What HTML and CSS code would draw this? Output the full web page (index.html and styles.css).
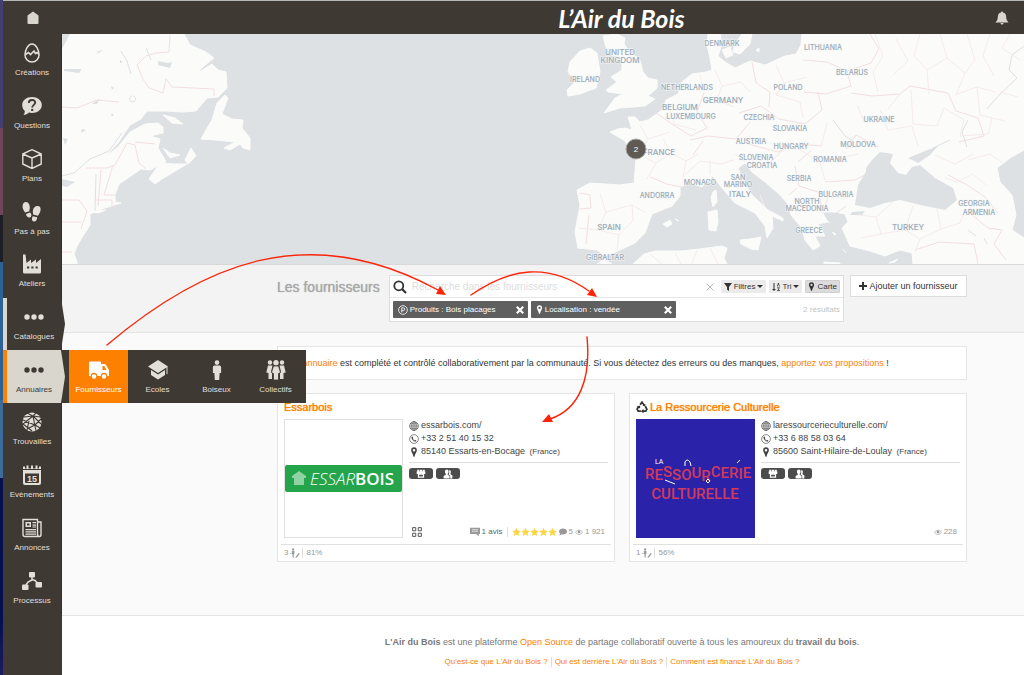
FILE: index.html
```html
<!DOCTYPE html>
<html lang="fr">
<head>
<meta charset="utf-8">
<title>Les fournisseurs - L'Air du Bois</title>
<link rel="stylesheet" href="styles.css">
</head>
<body>
<svg class="defs" aria-hidden="true">
  <symbol id="dots" viewBox="0 0 20 20"><circle cx="3" cy="10" r="2.7"/><circle cx="10" cy="10" r="2.7"/><circle cx="17" cy="10" r="2.7"/></symbol>
  <symbol id="man" viewBox="0 0 10 20"><circle cx="5" cy="2.6" r="2.3"/><path d="M2.5 5.5h5q1.600 0 1.600 1.600V13H7.600l-.4 7H2.800l-.4-7H.9V7.100q0-1.600 1.600-1.600z"/></symbol>
  <symbol id="pin" viewBox="0 0 10 14"><path fill-rule="evenodd" d="M5 .5a4 4 0 0 0-4 4c0 3 2.600 4.500 3.200 9h1.600C6.400 9 9 7.500 9 4.500a4 4 0 0 0-4-4zm0 2.300a1.800 1.800 0 1 1 0 3.600 1.800 1.800 0 0 1 0-3.600z"/></symbol>
  <symbol id="globe" viewBox="0 0 16 16"><g fill="none" stroke="currentColor"><circle cx="8" cy="8" r="7"/><ellipse cx="8" cy="8" rx="3.500" ry="7"/><path d="M8 1v14M1 8h14M2 4.500h12M2 11.500h12"/></g></symbol>
  <symbol id="phone" viewBox="0 0 16 16"><circle cx="8" cy="8" r="7" fill="none" stroke="currentColor"/><path d="M5 3.500c-2 1.500-1 4 .8 6 2 2 4.600 3.400 6.200 1.500l-2-1.700-1.200 1C7.500 9.700 6.500 8.600 6 7.300l1-1z"/></symbol>
  <symbol id="shop" viewBox="0 0 16 16"><path fill-rule="evenodd" d="M2 1h3v3H2zm4 0h4v3H6zm5 0h3v3h-3zM1 4h14v3a2 2 0 0 1-2 1v6H3V8a2 2 0 0 1-2-1zm4 5v3h6V9z"/></symbol>
  <symbol id="people" viewBox="0 0 16 16"><ellipse cx="6" cy="4.500" rx="3" ry="3.800"/><path d="M4.500 7h3v2l3 2v4H1v-4l3.500-2z"/><path d="M9.500 2c3-1 4 2 2.500 5v1.500l3 2V15h-3.500v-4.500L9 9c1-2 1.500-4 .5-7z"/></symbol>
  <symbol id="eye" viewBox="0 0 16 12"><path fill-rule="evenodd" d="M8 1.500C4.500 1.500 2 4 .5 6.300 2 8.700 4.500 11 8 11s6-2.300 7.500-4.700C14 4 11.500 1.500 8 1.500zm0 1c3 0 5 2 6.300 3.800C13 8 11 10 8 10S3 8 1.700 6.300C3 4.500 5 2.500 8 2.500z"/><circle cx="8" cy="6" r="2.800"/></symbol>
  <symbol id="vote" viewBox="0 0 16 16"><circle cx="5" cy="2.300" r="1.800"/><path d="M3 4.500h4v5l-1 .5v5H4v-5l-1-.5zM0 8h2v1H0zM9 14l5-6 1.500 1.200L11 15H8.500z"/></symbol>
  <symbol id="cross" viewBox="0 0 10 10"><path d="M1 1l8 8m0-8l-8 8" fill="none" stroke="currentColor" stroke-width="2.600"/></symbol>
  <symbol id="star" viewBox="0 0 16 16"><path d="M8 .5l2.300 5 5.400.6-4 3.700 1.100 5.500L8 12.600l-4.800 2.700 1.100-5.500-4-3.700 5.400-.6z"/></symbol>
</svg>

<header class="topbar">
  <a class="home" href="#" aria-label="Accueil"><svg class="i14" viewBox="0 0 14 14"><path d="M7 0.500l5.500 4v7.500q0 1-1 1h-9q-1 0-1-1V4.500z"/></svg></a>
  <a class="logo" href="#">L’Air du Bois</a>
  <button class="bell" aria-label="Notifications"><svg class="i14" viewBox="0 0 14 14"><path d="M7 .5c.7 0 1 .5 1 1 2.200.5 3.200 2.300 3.200 4.500 0 2.500.8 3.800 2.300 5.500H.5C2 9.800 2.800 8.500 2.800 6c0-2.200 1-4 3.200-4.500 0-.5.300-1 1-1zM5.500 12h3a1.500 1.500 0 0 1-3 0z"/></svg></button>
</header>

<nav class="sidebar" aria-label="Menu principal">
  <a class="item" href="#"><svg class="i20" viewBox="0 0 20 20"><g fill="none" stroke="currentColor" stroke-width="1.500"><path d="M10 1C6 1 3 7 3 12a7 7 0 0 0 14 0c0-5-3-11-7-11z"/><path d="M3.500 11.500l3-2 2 2 3.500-3.500 1.500 2.500 1.500-1 2 2" stroke-width="1.600"/></g></svg>Créations</a>
  <a class="item" href="#"><svg class="i20" viewBox="0 0 20 20"><path d="M10 1c5.500 0 9.800 3.500 9.800 8s-4.300 8-9.800 8c-1 0-2-.1-3-.4C5.500 18 3.500 19 1.300 19c1-1 1.500-2.500 1.500-4C1.200 13.500.2 11.500.2 9 .2 4.500 4.500 1 10 1z"/><path d="M6.800 7c0-4 6.400-4 6.400-.4 0 2.400-3 2.200-3 5" fill="none" stroke="#3e3a33" stroke-width="1.900"/><circle cx="10.200" cy="13.900" r="1.200" fill="#3e3a33"/></svg>Questions</a>
  <a class="item" href="#"><svg class="i20" viewBox="0 0 20 20"><path d="M10 .7l9.200 4.300v10L10 19.500.8 15V5zM.8 5l9.200 4 9.200-4M10 9v10" fill="none" stroke="currentColor" stroke-width="1.400" stroke-linejoin="round"/></svg>Plans</a>
  <a class="item" href="#"><svg class="i20" viewBox="0 0 20 20"><path d="M4 0c2.500 0 4 3 3.800 6 0 1.500-.8 2.300-.4 3.300L3 10.500C1.500 8.500.3 6 .6 3.800.8 1.500 2 0 4 0z"/><path d="M4 12l4-1.400c1.500 1 2 3.800.3 4.700C6.300 16 4.300 14.500 4 12z"/><path d="M15.500 4c2.500 0 3.500 2 3 4.500-.4 2-1.500 3.500-2.500 5.200L11 12.500c.3-1-.3-2-.2-3.500C11 6 13 4 15.500 4z"/><path d="M10.800 14.200l4.300 1c.2 2.500-1.500 4.800-3.500 4.300-1.800-.5-2.200-3.500-.8-5.300z"/></svg>Pas à pas</a>
  <a class="item" href="#"><svg class="i20" viewBox="0 0 20 20"><path fill-rule="evenodd" d="M1 .5h2.500L4.500 9l4.500-3.500V9l5-3.500V9l5-4v13q0 1.500-1.500 1.500h-15Q1 19.500 1 18zm4 12v2h2.200v-2zm4.300 0v2h2.200v-2zm4.300 0v2h2.200v-2z"/></svg>Ateliers</a>
  <a class="item open" href="#"><svg class="i20"><use href="#dots"/></svg>Catalogues</a>
  <div class="group">
    <a class="item open active" href="#"><svg class="i20"><use href="#dots"/></svg>Annuaires</a>
    <div class="submenu">
      <a class="item current" href="#"><svg class="i20" viewBox="0 0 20 20"><path fill-rule="evenodd" d="M1 1.500h10q1 0 1 1V4h3.500q1 0 1.500 1l3 5v6H0V2.500q0-1 1-1zM13.500 6v4h4L15.300 6z"/><circle cx="5" cy="16" r="3.200" fill="#fd8000"/><circle cx="15" cy="16" r="3.200" fill="#fd8000"/><circle cx="5" cy="16.500" r="2.200"/><circle cx="15" cy="16.500" r="2.200"/></svg>Fournisseurs</a>
      <a class="item" href="#"><svg class="i20" viewBox="0 0 20 20"><path d="M10 0l10 6.500L10 13 0 6.500zM3 10l7 4.500 7-4.500v5l-7 4.500L3 15zM18.500 7h1v7h-1z"/></svg>Ecoles</a>
      <a class="item" href="#"><svg class="i20"><use href="#man"/></svg>Boiseux</a>
      <a class="item" href="#"><svg class="i20" viewBox="0 0 20 20"><circle cx="4" cy="2.500" r="2.200"/><circle cx="16" cy="2.500" r="2.200"/><path d="M2 5.500h4.500L5 12l1 1v6H2.500v-6L.3 12.500zM18 5.500h-4.500L15 12l-1 1v6h3.500v-6l2.200-.5z"/><circle cx="10" cy="2.800" r="2.700"/><path d="M7.500 6h5l2 6.500-2 1v6.500h-5v-6.500l-2-1z" stroke="#3e3a33" stroke-width=".8"/></svg>Collectifs</a>
    </div>
  </div>
  <a class="item" href="#"><svg class="i20" viewBox="0 0 20 20"><circle cx="10" cy="10" r="9.500"/><path d="M2 5l9-1 7 1M5 1l6 3 3 15M11 4L1 12l9 7M1 8l12 5 6-6M5 17l8-4 5 3M7 9l-2 9M14 1l-3 3 8 8" fill="none" stroke="#3e3a33" stroke-width="1.100"/></svg>Trouvailles</a>
  <a class="item" href="#"><svg class="i20" viewBox="0 0 20 20"><path fill-rule="evenodd" d="M1 5h18v13q0 2-2 2H3q-2 0-2-2zm2 3.500V17q0 1 1 1h12q1 0 1-1V8.500z"/><path d="M1 4V1.500h2v2h1.500v-3h2v3H9v-3h2v3h2.500v-3h2v3H17v-2h2V4z"/><text x="10" y="17" text-anchor="middle" class="day">15</text></svg>Evènements</a>
  <a class="item" href="#"><svg class="i20" viewBox="0 0 20 20"><path d="M1 1.500h14.500v15q0 2 2 2H3q-2 0-2-2zM15.500 4H19v12.500q0 2-1.500 2" fill="none" stroke="currentColor" stroke-width="1.400"/><path fill-rule="evenodd" d="M3.500 4h5.500v5H3.500zM5 5.500v2h2.500v-2zM10.500 4H14v1.200h-3.500zm0 2.500H14v1.200h-3.500zm0 2H14v1H10.500zM3.500 11H14v1.200H3.500zm0 2.300H14v1.200H3.500zm0 2.200H14v1.200H3.500z"/></svg>Annonces</a>
  <a class="item" href="#"><svg class="i20" viewBox="0 0 20 20"><rect x="7" y="1" width="6" height="5.500" rx="1"/><rect x="0" y="13.500" width="6.500" height="5.500" rx="1"/><rect x="13.500" y="11" width="6.500" height="5.500" rx="1"/><path d="M10 6v3l-4 2-2 3M10 8.500l3 1 2 2" fill="none" stroke="currentColor" stroke-width="1.500"/></svg>Processus</a>
</nav>

<main class="main">
  <section class="map" aria-label="Carte">
    <svg class="mapsvg" viewBox="62 34 962 230" preserveAspectRatio="xMinYMin slice">
      <g class="land">
        <path d="M70 34H184L190 45 206 52 214 58 204 66 196 74 212 64 218 70 226 72 227 88 218 97 207 98 196 111 183 112 165 111 147 111 141 119 130 125 118 143 104 158 118 147 130 132 145 124 158 123 163 127 163 133 150 136 160 139 158 148 164 158 166 162 150 170 141 169 128 178 119 184 115 195 115 202 121 203 105 208 90 214 90 225 83 236 77 246 74 254 77 262V264H62V50z"/>
        <path d="M225 95L228 98 222 114 232 119 243 120 242 128 250 138 250 150 243 148 240 144 230 150 224 148 235 142 215 140 201 139 206 130 212 120 217 103zM163 115L175 118 183 124 172 123zM163 148L170 153 180 155 170 158zM185 160L191 148 196 156 188 164zM160 163L175 164 187 164 172 173 162 179 155 184 149 179zM92 212L106 210 98 213z"/>
        <path d="M610 132L618 129 625 128 632 130 628 117 635 117 640 122 648 120 662 110 666 100 678 94 682 82 692 74 706 72 712 70 710 58 707 45 708 34H720L722 44 718 56 725 62 735 68 750 61 765 65 785 56 796 54 801 45 802 34H1024V150L1010 158 997 168 1000 182 1012 195 1016 215 1012 230 1024 238V264H913L912 253 900 250 885 256 870 251 850 246 842 228 848 222 845 214 835 212 822 212 828 222 818 224 825 236 815 236 820 246 813 250 805 240 802 228 791 215 788 204 778 193 765 182 752 172 745 163 738 168 743 180 752 195 768 210 783 218 783 221 772 216 773 228 767 238 765 226 755 213 735 203 722 188 713 176 702 187 690 183 680 187 680 196 672 206 652 214 645 233 635 243 620 250 605 256 597 250 578 248 575 232 580 205 577 190 590 183 620 185 634 183 636 160 625 141z"/>
        <path d="M580 51L590 48 597 53 600 72 596 88 580 94 568 96 567 90 575 82 568 72 570 62zM603 36L617 34 625 38 624 44 630 52 640 60 643 72 648 78 657 80 657 88 648 96 655 99 645 106 620 108 604 113 615 98 623 94 608 92 606 90 617 82 611 77 622 70 622 58 612 55 606 47zM722 50L730 47 733 55 726 58zM735 44L742 34H752L750 44 740 54 733 52zM756 50L759 48V52zM740 240L750 239 761 237 758 250 751 249 741 244zM713 192L716 190 717 202 713 207 711 198zM708 212L717 210 718 222 716 231 709 230zM663 224L670 220 672 224 667 227zM675 219L679 221zM633 264L644 254 655 251 680 251 700 249 722 246 727 248 724 258 727 264zM597 264L604 259 612 264zM824 262L840 263V264H824zM889 263L898 259 895 262zM826 220L830 223M832 232L836 234 834 235M843 249L846 253"/>
      </g>
      <g class="water">
        <path d="M855 205L858 185 866 172 866 168 872 160 880 152 893 154 890 163 898 173 906 175 912 167 920 165 935 178 953 188 957 200 945 210 925 206 900 200 885 203 870 208zM908 158L925 151 938 146 930 155 918 163zM852 212L865 211 862 215 850 215zM62 34h8l-8 14zM62 179l13 3-8 5-5-1zM158 61l10 2 4-1-2 6-12-3zM64 69l18 0-3 4-15-2zM92 104l8-6-3 6zM96 52l7-2-4 3zM82 129l4 1-5 3zM63 120l5-1zM63 138l5 1-3 6zM111 86l3 2-2 2zM120 60l3 2-3 1zM112 113l2 3-3 0z"/>
        <path class="river" d="M62 176L74 173 90 159 109 151 122 133M95 211l1-37M146 48l5 12M121 51l6 10 4 13M132 96a3 3 0 1 0 1 0M1024 46l-12 9-3 15 8 8-18 17-12 14M968 120l-6 12 5 15M950 140l-17 8M833 120l12 16 8 5M968 230l8 6M984 238l3 6"/>
      </g>
      <g class="border">
        <path d="M62 107l15 1 20-8 22 2M170 35l-1 17-13 1-10 3-9 9 6 14 6 9 14 5 3-14 6 8 42 2v7M86 168l21 0 8-3 12-22 8 2 4 18 7 6M101 170l-3 36M113 165l-9 30h12M62 200h17l8 11-6 18M94 200h18v7M62 222h19M62 252h10M135 142l20 2"/>
        <path d="M803 60l24 2 20 9 4 15-25 8-22-2M847 71l24-8 8-14-9-15M851 93l21 3 28-2 10-8 38 7 8 18 22 7 6 18-25 6M752 62l4 21 14 9-1 15M739 113l22-7 18 13 26 5 17-14-4-18M704 93l-7 19 10 16-16 8-22-14-14-10M690 140l18-4 28 3 14-17M693 155l10-14M748 144l30 8 18-8 26 2M784 149l-16 15M795 166l4 20 19 6 4 16M811 151l-13 11M797 188l-8 7M825 182l30-2 10-5M846 149l10-14 22 12M836 213l10-7M650 177l17 7 14 3M580 193l10 2 1 13-11 1M589 215l-3 29M948 175l19 10 18 12 13 16M966 210l22 18 14 2-8 14 12 16M915 250l24-8 35 2 4 20M825 206l4-13M752 160l13-3 9 12"/>
      </g>
      <g class="region">
        <path d="M875 34l8 22-10 16 5 20M896 39l12 22-15 14M920 34l-6 22 13 14 20-12M940 34l7 24 18 15-9 22M967 34l8 26-10 13M990 34l-7 22 11 20M1010 34l-8 14 18 12M927 70l2 24M955 95l22-8 19 5M977 87l3 28 25 6M1000 92l18 5M880 110l8 20 24-4 6 20M911 90l2 34 24 2 7-18M900 94l-12 15M944 108l20 12-4 16 28-2 4-16M857 105l8 18M968 160l22-6 14 10M935 155l20 9 18-10"/>
        <path d="M715 70l7 16 19-4 9 10M722 86l-5 14 17 7M700 75l4 17M776 65l8 18 23-6M784 83l-8 12 24 7M800 102l3 16M670 108l4 16 22 6M640 125l8 14 22-7M648 139l-8 16 16 8 15-10-8-14M656 163l-9 16M671 153l15 8-3 16M686 161l12-7M685 175l15-14 22 3 11-4M710 160v15M600 194l6 18 26-7 13 7M606 212l-8 18-20-2M598 230l21 5 14-15-1-15M619 235l-2 15M735 154l12 9M800 150l20 12 20-4M820 162l5 18M840 158l18-4M827 123l-6 24M760 195l5 12M858 215l18 2 5 17-20 4M881 234l24-4 8-24M905 230l15 9-5 13M920 239l21-10-4-20M941 229l19-6 5-14M876 217l18-16M650 254l12 10M675 253l6 11M697 250l-5 14M710 248l8 16M945 178l12 4 16-8 14 12"/>
      </g>
      <g class="labels">
        <text x="620" y="55" class="big">UNITED</text><text x="620" y="63" class="big">KINGDOM</text><text x="585" y="82">IRELAND</text><text x="722" y="46">DENMARK</text><text x="823" y="50">LITHUANIA</text><text x="852" y="75">BELARUS</text><text x="687" y="90">NETHERLANDS</text><text x="788" y="90">POLAND</text><text x="723" y="103" class="big">GERMANY</text><text x="680" y="110" class="big">BELGIUM</text><text x="691" y="119">LUXEMBOURG</text><text x="759" y="120">CZECHIA</text><text x="879" y="122">UKRAINE</text><text x="790" y="131">SLOVAKIA</text><text x="751" y="144">AUSTRIA</text><text x="791" y="149">HUNGARY</text><text x="858" y="147">MOLDOVA</text><text x="659" y="155" class="big">FRANCE</text><text x="756" y="160">SLOVENIA</text><text x="762" y="168">CROATIA</text><text x="830" y="162">ROMANIA</text><text x="738" y="180">SAN</text><text x="738" y="187">MARINO</text><text x="700" y="185">MONACO</text><text x="799" y="181">SERBIA</text><text x="740" y="197" class="big">ITALY</text><text x="657" y="198">ANDORRA</text><text x="836" y="197">BULGARIA</text><text x="807" y="204">NORTH</text><text x="807" y="211">MACEDONIA</text><text x="609" y="230" class="big">SPAIN</text><text x="809" y="233">GREECE</text><text x="908" y="230" class="big">TURKEY</text><text x="974" y="206">GEORGIA</text><text x="979" y="215">ARMENIA</text><text x="605" y="260">GIBRALTAR</text>
      </g>
      <circle cx="636" cy="149" r="10" class="cluster"/><text x="636" y="152" class="count">2</text>
    </svg>
  </section>

  <section class="searchband">
    <h1>Les fournisseurs</h1>
    <form class="search">
      <div class="searchrow">
        <svg class="i14" viewBox="0 0 14 14"><circle cx="5.800" cy="5.800" r="4.500" fill="none" stroke="#333" stroke-width="1.800"/><path d="M9 9l4 4" stroke="#333" stroke-width="2.300"/></svg>
        <input type="text" aria-label="Recherche" placeholder="Recherche dans les fournisseurs">
        <button type="button" class="clear" aria-label="Effacer"><svg class="i8" viewBox="0 0 8 8"><path d="M.5.5l7 7m0-7l-7 7" fill="none" stroke="#bbb"/></svg></button>
        <button type="button" class="tool"><svg class="i8" viewBox="0 0 8 8"><path d="M0 0h8L5 4v4L3 6.500V4z"/></svg>Filtres<i class="caret"></i></button>
        <button type="button" class="tool"><svg class="i8" viewBox="0 0 8 8"><path d="M1.500 0h1v6H4L2 8 0 6h1.500zM5 3.500L6 0h.8l1 3.500H7L6.400 1 5.800 3.500zM5 4.500h3L6.200 7.200H8V8H5l1.700-2.700H5z"/></svg>Tri<i class="caret"></i></button>
        <button type="button" class="tool on"><svg class="ipin"><use href="#pin"/></svg>Carte</button>
      </div>
      <div class="tagrow">
        <span class="tag"><svg class="i9" viewBox="0 0 16 16"><circle cx="8" cy="8" r="7" fill="none" stroke="currentColor" stroke-width="1.300"/><path d="M6 12V4.500h2.500a2.200 2.200 0 0 1 0 4.500H6" fill="none" stroke="currentColor" stroke-width="1.400"/></svg>Produits : Bois placages<button type="button" aria-label="Retirer"><svg class="i8"><use href="#cross"/></svg></button></span>
        <span class="tag wide"><svg class="ipin"><use href="#pin"/></svg>Localisation : vendée<button type="button" aria-label="Retirer"><svg class="i8"><use href="#cross"/></svg></button></span>
        <span class="results">2 résultats</span>
      </div>
    </form>
    <button class="add"><svg class="i8" viewBox="0 0 8 8"><path d="M3 0h2v3h3v2H5v3H3V5H0V3h3z"/></svg>Ajouter un fournisseur</button>
  </section>

  <section class="content">
    <p class="notice">Cet <a href="#">annuaire</a> est complété et contrôlé collaborativement par la communauté. Si vous détectez des erreurs ou des manques, <a href="#">apportez vos propositions</a> !</p>
    <div class="cards">
      <article class="card">
        <h2><a href="#">Essarbois</a></h2>
        <div class="body">
          <div class="thumb"><svg viewBox="0 0 117 117"><rect y="45" width="117" height="27" rx="2" fill="#24a54b"/><path d="M7 56l7-5 7 5v2h-2v7H9v-7H7z" fill="#8ed3a1"/><text x="25" y="65" class="essar">ESSAR<tspan class="bois">BOIS</tspan></text></svg></div>
          <div class="info">
            <ul class="contact">
              <li><svg class="i9"><use href="#globe"/></svg>essarbois.com/</li>
              <li><svg class="i9"><use href="#phone"/></svg>+33 2 51 40 15 32</li>
              <li><svg class="i9"><use href="#pin"/></svg>85140 Essarts-en-Bocage <small>(France)</small></li>
            </ul>
            <div class="badges"><span><svg class="i9"><use href="#shop"/></svg></span><span><svg class="i9"><use href="#people"/></svg></span></div>
            <div class="stats">
              <svg class="i9 qr" viewBox="0 0 16 16"><path d="M1 1h5v5H1zM10 1h5v5h-5zM1 10h5v5H1zM10 10h5v5h-5z" fill="none" stroke="currentColor" stroke-width="1.600"/></svg>
              <svg class="i9" viewBox="0 0 16 16"><path fill-rule="evenodd" d="M0 1h16v10h-2v4l-4-4H0zm3 3v1h10V4zm0 3v1h10V7z"/></svg><span class="avis">1 avis</span>
              <span class="stars"><svg class="i9"><use href="#star"/></svg><svg class="i9"><use href="#star"/></svg><svg class="i9"><use href="#star"/></svg><svg class="i9"><use href="#star"/></svg><svg class="i9"><use href="#star"/></svg></span>
              <svg class="i8" viewBox="0 0 16 16"><path d="M8 1c4.500 0 8 2.500 8 6s-3.500 6-8 6c-1 0-2 0-3-.4C4 14 2 15 0 15c1-1 2-2 2-4C.7 10 0 8.600 0 7c0-3.500 3.500-6 8-6z"/></svg>5
              <svg class="i8"><use href="#eye"/></svg>1 921
            </div>
          </div>
        </div>
        <footer>3 <svg class="i9"><use href="#vote"/></svg><span>81%</span></footer>
      </article>
      <article class="card">
        <h2><svg class="i11" viewBox="0 0 16 16"><path d="M5.500 5L8 1.500 10.800 5.500M12.500 7l2 4-1.500 2.500H9M6.500 13.500H3L1.500 11l2-4" fill="none" stroke="currentColor" stroke-width="2.300"/><path d="M8.500 5.500l4-2v4zM10 10.500v6l-3.500-3zM1 7.500l4.500-1.500v4z"/></svg><a href="#">La Ressourcerie Culturelle</a></h2>
        <div class="body">
          <div class="thumb blue"><svg viewBox="0 0 117 117"><text x="8" y="59" dy="0 1 -3 3 0 -2 3 -4 1 0 1 -1" class="red">RESSOURCERIE</text><text x="58" y="79" class="red" text-anchor="middle">CULTURELLE</text><text x="18" y="44" class="la">LA</text><path d="M48 46v-4q2-4 5 0l1 4M28 60l10 4M100 43l3-3M69 61l2-2 2 2-2 2z" fill="none" stroke="#fff"/></svg></div>
          <div class="info">
            <ul class="contact">
              <li><svg class="i9"><use href="#globe"/></svg>laressourcerieculturelle.com/</li>
              <li><svg class="i9"><use href="#phone"/></svg>+33 6 88 58 03 64</li>
              <li><svg class="i9"><use href="#pin"/></svg>85600 Saint-Hilaire-de-Loulay <small>(France)</small></li>
            </ul>
            <div class="badges"><span><svg class="i9"><use href="#shop"/></svg></span><span><svg class="i9"><use href="#people"/></svg></span></div>
            <div class="stats end"><svg class="i8"><use href="#eye"/></svg>228</div>
          </div>
        </div>
        <footer>1 <svg class="i9"><use href="#vote"/></svg><span>56%</span></footer>
      </article>
    </div>
  </section>

  <footer class="pagefoot">
    <p><b>L'Air du Bois</b> est une plateforme <a href="#">Open Source</a> de partage collaboratif ouverte à tous les amoureux du <b>travail du bois</b>.</p>
    <div class="links"><a href="#">Qu'est-ce que L'Air du Bois ?</a><a href="#">Qui est derrière L'Air du Bois ?</a><a href="#">Comment est financé L'Air du Bois ?</a></div>
  </footer>
</main>

<svg class="arrows" viewBox="0 0 1024 675" aria-hidden="true">
  <g fill="none" stroke="#fb2408" stroke-width="1.400" stroke-linecap="round"><path d="M107 345C205 262 310 220 438 290M471 295C510 268 548 262 589 291M587 337C591 378 580 409 550 419"/></g>
  <g fill="#fb2408"><path d="M446 295l-10-1 4-8zM597 297l-10-2 5-7zM542 422l7-8 4 8z"/></g>
</svg>
</body>
</html>
```
FILE: styles.css
```css
* { box-sizing: border-box; }

body {
  margin: 0;
  min-height: 100vh;
  padding-left: 3px;
  position: relative;
  display: grid;
  grid-template-columns: 59px 1fr;
  grid-template-rows: 34px 1fr;
  font: 9px/13px "Liberation Sans", Arial, sans-serif;
  color: #333;
  background: linear-gradient(#433f70 0 128px, #70445a 128px 215px, #1e1e26 215px 262px, #2c6298 262px 400px, #3c6c9c 400px 478px, #05114e 478px 620px, #1c1c62);
}

svg { fill: currentColor; flex: none; display: block; }
a { color: #fd8000; text-decoration: none; }
button { font: inherit; color: inherit; border: 0; padding: 0; background: none; }
h1, h2, p, ul { margin: 0; padding: 0; font-weight: normal; }

.defs { position: absolute; width: 0; height: 0; }
.i8 { width: 8px; height: 8px; }
.i9 { width: 10px; height: 10px; }
.i11 { width: 12px; height: 12px; }
.i14 { width: 14px; height: 14px; }
.i20 { width: 20px; height: 20px; }
.ipin { width: 7px; height: 9px; }

.topbar {
  grid-column: 1 / -1;
  display: grid;
  grid-template-columns: 59px 1fr 45px;
  align-items: center;
  background: #3e3a33;
  color: #d9d6ce;
  border-top: 1px solid #b4b8b6;
}
.home, .bell { justify-self: center; color: inherit; }
.logo {
  justify-self: center;
  margin-left: 202px;
  font: italic bold 25px/32px "Lato", sans-serif;
  color: #fff;
}

.sidebar {
  background: #3e3a33;
  border-right: 1px solid #33302a;
  display: grid;
  grid-template-rows: repeat(11, 1fr);
  height: 580px;
  position: relative;
  z-index: 2;
  box-shadow: 0 200px 0 #3e3a33;
}
.item {
  display: flex;
  flex-direction: column;
  align-items: center;
  justify-content: center;
  gap: 4px;
  padding-top: 2px;
  color: #e2dfd9;
  font-size: 8px;
  line-height: 12px;
  position: relative;
}
.open { border-left: 4px solid #d9d6ce; }
.open::after {
  content: "";
  position: absolute;
  left: 100%;
  top: 0;
  width: 4px;
  height: 100%;
  background: #3e3a33;
  clip-path: polygon(0 0, 100% 50%, 0 100%);
}
.active { background: #d9d6ce; color: #3e3a33; border-color: #fd8000; height: 100%; }
.active::after { background: #d9d6ce; z-index: 1; }
.group { position: relative; }
.submenu {
  position: absolute;
  left: 59px;
  top: 0;
  height: 100%;
  display: grid;
  grid-template-columns: repeat(4, 59px);
  padding: 0 1px 0 7px;
  background: #3e3a33;
}
.current { background: #fd8000; color: #fff; }
.day { font: bold 9px "Liberation Sans", sans-serif; }

.main { min-width: 0; display: flex; flex-direction: column; background: #fff; }

.map { height: 230px; background: #dde1e4; }
.mapsvg { width: 100%; height: 100%; }
.land { fill: #fbfbfa; stroke: #fbfbfa; stroke-linejoin: round; }
.water { fill: #dde1e4; }
.river { fill: none; stroke: #dde1e4; }
.border, .region { fill: none; stroke: #f3dfe0; stroke-linejoin: round; }
.region { stroke: #f6ebeb; }
.labels { font: 500 7px "Inter", sans-serif; fill: #9aaab5; text-anchor: middle; paint-order: stroke; stroke: #f5f7f8; stroke-width: 1px; }
.big { font-size: 8px; }
.cluster { fill: #5f5b54; stroke: #aaa8a3; stroke-width: 1px; }
.count { font-size: 8px; fill: #fff; text-anchor: middle; }

.searchband {
  display: flex;
  align-items: flex-start;
  padding: 10px 57px 10px 215px;
  background: #f3f3f3;
  border-top: 1px solid #d8d8d8;
  border-bottom: 1px solid #e4e4e4;
}
h1 { font-size: 14px; line-height: 24px; color: #a8a8a8; text-shadow: 0 0 1px #a8a8a8; white-space: nowrap; margin-right: 9px; }
.search { flex: 1; min-width: 0; background: #fff; border: 1px solid #ddd; margin-right: 6px; }
.searchrow { display: flex; align-items: center; height: 22px; padding: 0 3px; border-bottom: 1px solid #e6e6e6; gap: 3px; }
.search input { flex: 1; min-width: 0; border: 0; outline: 0; padding: 0 2px; font: 10px/16px "Liberation Sans", sans-serif; background: none; }
.search input::placeholder { color: #ddd; opacity: 1; }
.clear { margin-right: 4px; }
.tool { display: flex; align-items: center; gap: 2px; height: 13px; padding: 0 3px; background: #ebebeb; border-radius: 1px; font-size: 8px; }
.tool.on { background: #dcdcdc; border: 1px solid #d0d0d0; padding: 0 2px; }
.caret { border: 3px solid transparent; border-top-color: #333; border-bottom: 0; }
.tagrow { display: flex; align-items: center; gap: 3px; padding: 3px; }
.tag { display: flex; align-items: center; gap: 2px; width: 135px; height: 17px; padding: 0 4px 0 5px; background: #5f5f5f; color: #fff; border-radius: 1px; font-size: 8px; }
.tag.wide { width: 145px; }
.tag button { margin-left: auto; }
.results { margin-left: auto; font-size: 8px; color: #c4c4c4; }
.add { display: flex; align-items: center; justify-content: center; gap: 2px; width: 117px; height: 22px; background: #fff; border: 1px solid #ddd; font-size: 9px; }

.content { background: #fafafa; border-bottom: 1px solid #e4e4e4; padding: 13px 57px 53px 215px; }
.notice { background: #fff; border: 1px solid #e6e6e6; padding: 10px 8px; height: 34px; font-size: 9px; white-space: nowrap; }
.cards { display: grid; grid-template-columns: 1fr 1fr; gap: 14px; margin-top: 13px; }
.card { background: #fff; border: 1px solid #e4e4e4; padding: 5px 3px 0; }
h2 { display: flex; align-items: center; gap: 2px; font-size: 11px; line-height: 16px; padding: 0 3px; margin-bottom: 4px; }
h2 a { text-shadow: 0 0 1px #fd8000; }
.body { display: flex; gap: 6px; padding: 0 3px 6px; }
.thumb { width: 119px; height: 119px; border: 1px solid #e0e0e0; }
.blue { background: #2a22a8; border-color: #2a22a8; }
.essar { font: italic 300 17px "Open Sans", sans-serif; fill: #fff; }
.bois { font-style: normal; font-weight: 600; }
.red { font: 500 15px "Roboto", sans-serif; fill: #d23a5c; }
.la { font: 7px "Roboto", sans-serif; fill: #fff; }
.info { flex: 1; display: flex; flex-direction: column; min-width: 0; }
.contact { list-style: none; border-bottom: 1px solid #ddd; padding-bottom: 4px; }
.contact li { display: flex; align-items: center; gap: 2px; white-space: pre; color: #444; }
small { font-size: 8px; }
.badges { display: flex; gap: 3px; padding-top: 5px; }
.badges span { display: flex; justify-content: center; align-items: center; width: 24px; height: 11px; background: #4c4c4c; color: #fff; border-radius: 3px; }
.stats { margin-top: auto; display: flex; align-items: center; gap: 2px; font-size: 8px; color: #999; padding: 0 3px; }
.end { justify-content: flex-end; }
.qr { color: #555; margin-right: auto; }
.avis { color: #666; padding-right: 4px; border-right: 1px solid #ddd; line-height: 10px; margin-right: 2px; }
.stars { display: flex; color: #fdd545; }
.stars svg { width: 9px; }
.card footer { display: flex; align-items: center; gap: 2px; border-top: 1px solid #e0e0e0; font-size: 8px; line-height: 16px; color: #999; padding: 0 3px; }
.card footer span { border-left: 1px solid #ddd; padding-left: 3px; line-height: 10px; }

.pagefoot { padding: 20px 57px 6px 215px; text-align: center; color: #777; }
.pagefoot p { font-size: 9px; white-space: nowrap; }
.links { display: flex; justify-content: center; margin-top: 8px; font-size: 8px; line-height: 10px; }
.links a + a { border-left: 1px solid #ddd; margin-left: 3px; padding-left: 3px; }

.arrows { position: absolute; left: 0; top: 0; width: 1024px; height: 675px; pointer-events: none; z-index: 3; }
```
